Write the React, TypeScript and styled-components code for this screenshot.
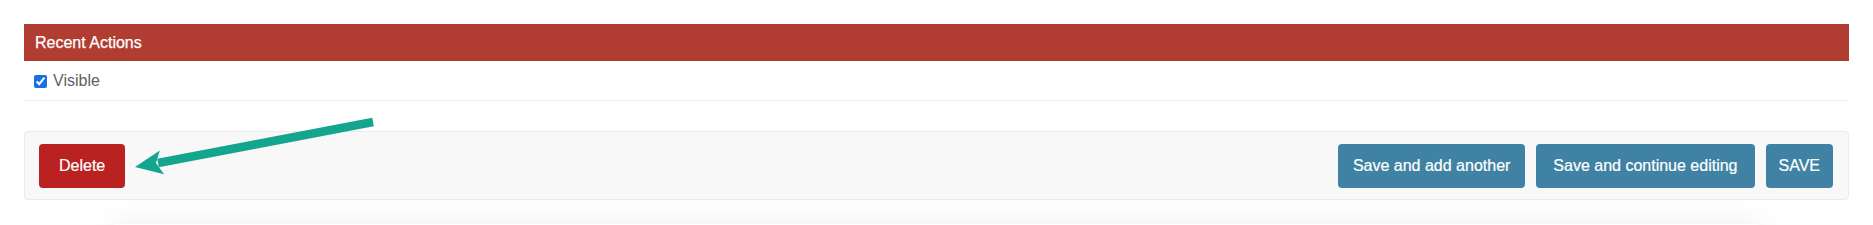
import React from 'react';
import styled, {createGlobalStyle} from 'styled-components';

const GlobalStyle = createGlobalStyle`
  html, body {
    margin: 0;
    padding: 0;
    background: #fff;
    overflow: hidden;
  }
  body {
    font-family: "Liberation Sans", Arial, sans-serif;
  }
`

const Page = styled.div`
  position: relative;
  padding: 24px 24px 0;
  height: 225px;
  box-sizing: border-box;
  overflow: hidden;
`

const Module = styled.div`
  display: flex;
  flex-direction: column;
`

const Caption = styled.h2`
  margin: 0;
  height: 37px;
  line-height: 37px;
  padding: 0 11px;
  background: #b03c32;
  color: #fff;
  font-size: 16px;
  font-weight: normal;
  -webkit-text-stroke: 0.25px #fff;
`

const FieldRow = styled.div`
  display: flex;
  align-items: center;
  gap: 6px;
  height: 39px;
  padding: 0 10px;
  border-bottom: 1px solid #eaeaea;
  color: #5f5f5f;
  font-size: 16px;
`

const Checkbox = styled.input`
  margin: 1px 0 0;
  width: 13px;
  height: 13px;
  accent-color: #1a6fe6;
`

const SubmitRow = styled.div`
  display: flex;
  align-items: center;
  justify-content: space-between;
  margin-top: 30px;
  height: 69px;
  padding: 0 15px 0 14px;
  box-sizing: border-box;
  background: #f8f8f8;
  border: 1px solid #eaeaea;
  border-radius: 4px;
`

const ButtonGroup = styled.div`
  display: flex;
  align-items: center;
  gap: 11px;
`

const Btn = styled.button<{ $pad?: number; $danger?: boolean }>`
  height: 44px;
  padding: 0 ${p => p.$pad ?? 16}px;
  border: none;
  border-radius: 4px;
  background: ${p => p.$danger ? '#ba2121' : '#4082a3'};
  color: #fff;
  font-family: "Liberation Sans", Arial, sans-serif;
  font-size: 16px;
  -webkit-text-stroke: 0.2px #fff;
  cursor: pointer;
`

const Shade = styled.div`
  margin: 24px 90px 0;
  height: 80px;
  box-shadow: 0 0 30px rgba(0, 0, 0, 0.08);
`

const ArrowLayer = styled.svg`
  position: absolute;
  left: 0;
  top: 0;
  pointer-events: none;
`

export default function App() {
  return (
    <>
      <GlobalStyle />
      <Page>
        <Module>
          <Caption>Recent Actions</Caption>
          <FieldRow>
            <Checkbox type="checkbox" defaultChecked />
            <span>Visible</span>
          </FieldRow>
        </Module>
        <SubmitRow>
          <Btn $danger $pad={20}>Delete</Btn>
          <ButtonGroup>
            <Btn $pad={15}>Save and add another</Btn>
            <Btn $pad={17}>Save and continue editing</Btn>
            <Btn $pad={13}>SAVE</Btn>
          </ButtonGroup>
        </SubmitRow>
        <Shade />
        <ArrowLayer width="1873" height="225" viewBox="0 0 1873 225">
          <line x1="373" y1="122" x2="158" y2="163" stroke="#13a58d" strokeWidth="8.5" />
          <polygon points="135,167 159.8,150.6 156,163 164,174.2" fill="#13a58d" />
        </ArrowLayer>
      </Page>
    </>
  );
}
